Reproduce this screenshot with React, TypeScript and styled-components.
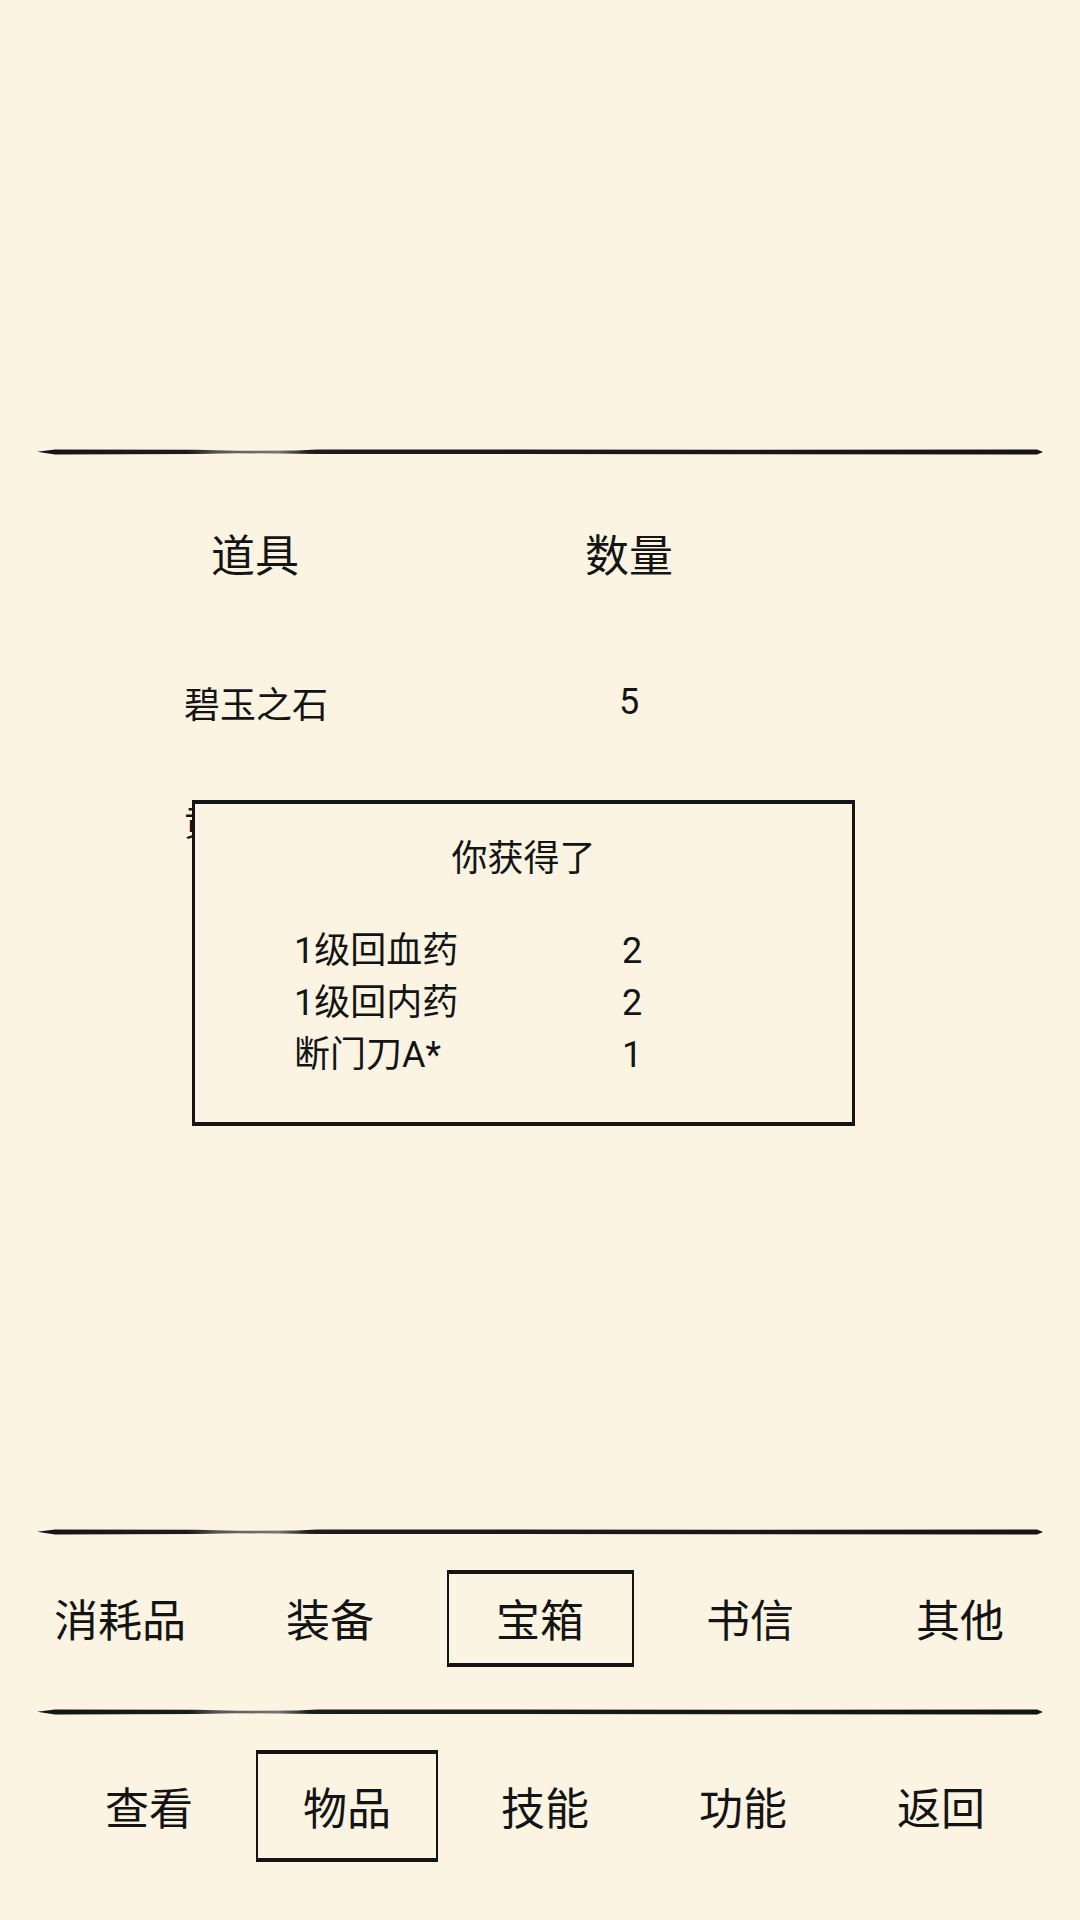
import React from 'react'
import styled, { createGlobalStyle } from 'styled-components'

const GlobalStyle = createGlobalStyle`
  html, body {
    margin: 0;
    padding: 0;
    background-color: #fbf4e3;
  }
  body {
    font-family: Roboto, "Noto Sans CJK SC", sans-serif;
    color: #141414;
  }
`

const Page = styled.div`
  width: 1080px;
  height: 1920px;
  display: flex;
  flex-direction: column;
  background-color: #fbf4e3;
  overflow: hidden;
`

const TopSpace = styled.div`
  height: 447px;
  flex-shrink: 0;
`

const DividerWrap = styled.div`
  height: 10px;
  margin: 0 37px;
  flex-shrink: 0;

  svg {
    display: block;
    width: 100%;
    height: 100%;
  }
`

const Content = styled.div`
  position: relative;
  height: 1070px;
  flex-shrink: 0;
  box-sizing: border-box;
  padding-top: 70px;
`

const Table = styled.div`
  display: grid;
  grid-template-columns: 300px 290px;
  padding-left: 184px;
`

const HeadCell = styled.div<{ $center?: boolean }>`
  height: 60px;
  line-height: 60px;
  font-size: 44px;
  padding-left: ${(p) => (p.$center ? '0' : '27px')};
  text-align: ${(p) => (p.$center ? 'center' : 'left')};
  margin-bottom: 56px;
`

const Cell = styled.div<{ $center?: boolean }>`
  height: 118px;
  display: flex;
  align-items: center;
  justify-content: ${(p) => (p.$center ? 'center' : 'flex-start')};
  font-size: 36px;
`

const Dialog = styled.div`
  position: absolute;
  top: 343px;
  left: 192px;
  width: 663px;
  height: 326px;
  box-sizing: border-box;
  background-color: #fbf4e3;
  border: 3px solid #141414;
  border-top-width: 4px;
  border-bottom-width: 4px;
  padding-top: 30px;
`

const DialogTitle = styled.div`
  text-align: center;
  font-size: 36px;
  line-height: 50px;
`

const RewardList = styled.div`
  display: grid;
  grid-template-columns: 290px 96px;
  padding-left: 99px;
  margin-top: 41px;
`

const RewardCell = styled.div<{ $center?: boolean }>`
  font-size: 36px;
  line-height: 52px;
  text-align: ${(p) => (p.$center ? 'center' : 'left')};
`

const TabRow = styled.div`
  height: 170px;
  flex-shrink: 0;
  box-sizing: border-box;
  display: grid;
  grid-template-columns: repeat(5, 210px);
  padding: 0 15px 8px;
  align-items: center;
  justify-items: center;
`

const NavRow = styled.div`
  flex: 1;
  display: grid;
  grid-template-columns: repeat(5, 198px);
  padding: 33px 0 0 50px;
  align-items: start;
  justify-items: center;
`

const Tab = styled.div<{ $active?: boolean; $w: number; $h: number }>`
  width: ${(p) => p.$w}px;
  height: ${(p) => p.$h}px;
  box-sizing: border-box;
  display: flex;
  align-items: center;
  justify-content: center;
  font-size: 44px;
  border: ${(p) => (p.$active ? '2px solid #141414' : '2px solid transparent')};
  border-top-width: 4px;
  border-bottom-width: 4px;
`

function Divider() {
  return (
    <DividerWrap>
      <svg viewBox="0 0 1006 10" preserveAspectRatio="none">
        <defs>
          <linearGradient id="ink" x1="0" x2="1" y1="0" y2="0">
            <stop offset="0" stopColor="#141414" />
            <stop offset="0.15" stopColor="#1c1c1c" />
            <stop offset="0.18" stopColor="#5a5650" />
            <stop offset="0.24" stopColor="#7a756d" />
            <stop offset="0.27" stopColor="#1c1c1c" />
            <stop offset="1" stopColor="#141414" />
          </linearGradient>
        </defs>
        <path
          d="M0 4.8 L18 2.4 L160 2.8 L200 3.8 L260 3.4 L280 2.4 L700 2.8 L1000 2.6 L1006 5 L1000 7.6 L700 7.2 L280 7 L200 6.2 L160 7 L18 7.4 Z"
          fill="url(#ink)"
        />
      </svg>
    </DividerWrap>
  )
}

const items = [
  { name: '碧玉之石', qty: 5 },
  { name: '黄金宝箱', qty: 1 },
]

const rewards = [
  { name: '1级回血药', qty: 2 },
  { name: '1级回内药', qty: 2 },
  { name: '断门刀A*', qty: 1 },
]

const tabs = ['消耗品', '装备', '宝箱', '书信', '其他']
const navs = ['查看', '物品', '技能', '功能', '返回']

export default function App() {
  return (
    <>
      <GlobalStyle />
      <Page>
        <TopSpace />
        <Divider />
        <Content>
          <Table>
            <HeadCell>道具</HeadCell>
            <HeadCell $center>数量</HeadCell>
            {items.map((it) => (
              <React.Fragment key={it.name}>
                <Cell>{it.name}</Cell>
                <Cell $center>{it.qty}</Cell>
              </React.Fragment>
            ))}
          </Table>
          <Dialog>
            <DialogTitle>你获得了</DialogTitle>
            <RewardList>
              {rewards.map((r) => (
                <React.Fragment key={r.name}>
                  <RewardCell>{r.name}</RewardCell>
                  <RewardCell $center>{r.qty}</RewardCell>
                </React.Fragment>
              ))}
            </RewardList>
          </Dialog>
        </Content>
        <Divider />
        <TabRow>
          {tabs.map((t) => (
            <Tab key={t} $w={187} $h={97} $active={t === '宝箱'}>
              {t}
            </Tab>
          ))}
        </TabRow>
        <Divider />
        <NavRow>
          {navs.map((n) => (
            <Tab key={n} $w={182} $h={112} $active={n === '物品'}>
              {n}
            </Tab>
          ))}
        </NavRow>
      </Page>
    </>
  )
}
